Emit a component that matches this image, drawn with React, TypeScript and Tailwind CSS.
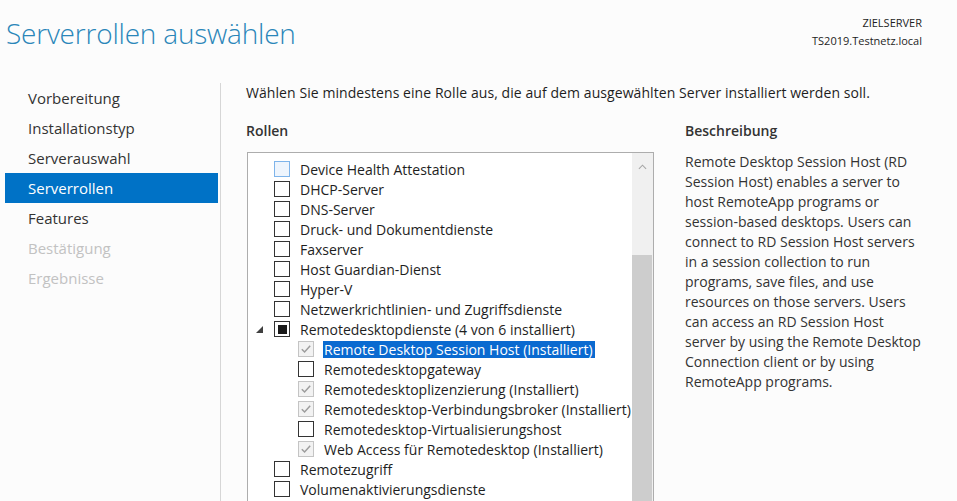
import React from 'react';

// --- DATA ---
const navItems = [
  { label: 'Vorbereitung', state: 'normal' },
  { label: 'Installationstyp', state: 'normal' },
  { label: 'Serverauswahl', state: 'normal' },
  { label: 'Serverrollen', state: 'active' },
  { label: 'Features', state: 'normal' },
  { label: 'Bestätigung', state: 'disabled' },
  { label: 'Ergebnisse', state: 'disabled' },
];

type CheckState = 'off' | 'focus' | 'installed' | 'partial';

interface Role {
  label: string;
  check: CheckState;
  level: 0 | 1;
  expander?: boolean;
  selected?: boolean;
}

const roles: Role[] = [
  { label: 'Device Health Attestation', check: 'focus', level: 0 },
  { label: 'DHCP-Server', check: 'off', level: 0 },
  { label: 'DNS-Server', check: 'off', level: 0 },
  { label: 'Druck- und Dokumentdienste', check: 'off', level: 0 },
  { label: 'Faxserver', check: 'off', level: 0 },
  { label: 'Host Guardian-Dienst', check: 'off', level: 0 },
  { label: 'Hyper-V', check: 'off', level: 0 },
  { label: 'Netzwerkrichtlinien- und Zugriffsdienste', check: 'off', level: 0 },
  { label: 'Remotedesktopdienste (4 von 6 installiert)', check: 'partial', level: 0, expander: true },
  { label: 'Remote Desktop Session Host (Installiert)', check: 'installed', level: 1, selected: true },
  { label: 'Remotedesktopgateway', check: 'off', level: 1 },
  { label: 'Remotedesktoplizenzierung (Installiert)', check: 'installed', level: 1 },
  { label: 'Remotedesktop-Verbindungsbroker (Installiert)', check: 'installed', level: 1 },
  { label: 'Remotedesktop-Virtualisierungshost', check: 'off', level: 1 },
  { label: 'Web Access für Remotedesktop (Installiert)', check: 'installed', level: 1 },
  { label: 'Remotezugriff', check: 'off', level: 0 },
  { label: 'Volumenaktivierungsdienste', check: 'off', level: 0 },
];

const description = [
  'Remote Desktop Session Host (RD',
  'Session Host) enables a server to',
  'host RemoteApp programs or',
  'session-based desktops. Users can',
  'connect to RD Session Host servers',
  'in a session collection to run',
  'programs, save files, and use',
  'resources on those servers. Users',
  'can access an RD Session Host',
  'server by using the Remote Desktop',
  'Connection client or by using',
  'RemoteApp programs.',
];

// --- CHECKBOX ---
function Checkbox({ state }: { state: CheckState }) {
  if (state === 'focus') {
    return <span className="w-4 h-4 shrink-0 border border-[#7eb4ea] bg-[#eef5fd]" />;
  }
  if (state === 'installed') {
    return (
      <span className="w-4 h-4 shrink-0 border border-[#c4c4c4] bg-[#f2f2f2] flex items-center justify-center">
        <svg viewBox="0 0 14 14" className="w-[14px] h-[14px]">
          <path d="M2.8 7.2 L5.6 10 L11.2 3.8" fill="none" stroke="#9c9c9c" strokeWidth="1.5" />
        </svg>
      </span>
    );
  }
  if (state === 'partial') {
    return (
      <span className="w-4 h-4 shrink-0 border border-[#333] bg-white flex items-center justify-center">
        <span className="w-[9px] h-[9px] bg-[#1a1a1a]" />
      </span>
    );
  }
  return <span className="w-4 h-4 shrink-0 border border-[#333] bg-white" />;
}

function RoleRow({ role }: { role: Role }) {
  return (
    <div className="h-5 flex items-center">
      <span className="w-[26px] shrink-0 flex items-center justify-start pl-[8px]">
        {role.expander && (
          <svg viewBox="0 0 7 7" className="w-[7px] h-[7px]">
            <path d="M7 0 L7 7 L0 7 Z" fill="#404040" />
          </svg>
        )}
      </span>
      {role.level === 1 && <span className="w-6 shrink-0" />}
      <Checkbox state={role.check} />
      <span
        className={
          role.selected
            ? 'ml-[9px] pl-px pr-[2px] leading-[17px] bg-[#0a6ad0] text-white whitespace-nowrap'
            : 'ml-[10px] whitespace-nowrap text-[#1e1e1e]'
        }
      >
        {role.label}
      </span>
    </div>
  );
}

export default function App() {
  return (
    <div className="w-[957px] h-[501px] bg-[#fcfcfc] overflow-hidden flex flex-col font-['Open_Sans',sans-serif] text-[#1e1e1e]">
      {/* Header */}
      <div className="h-[83px] shrink-0 flex justify-between pl-[6px] pr-[35px]">
        <h1 className="pt-[12px] text-[28px] font-light text-[#2a86b9] leading-[42px] tracking-[-0.2px]">
          Serverrollen auswählen
        </h1>
        <div className="pt-[14px] text-right text-[11px] leading-[18px] text-[#1e1e1e]">
          <div>ZIELSERVER</div>
          <div>TS2019.Testnetz.local</div>
        </div>
      </div>

      {/* Body */}
      <div className="flex flex-1 min-h-0">
        {/* Wizard steps */}
        <nav className="w-[221px] shrink-0 border-r border-[#d6d6d6] text-[15px]">
          {navItems.map((item) => (
            <div
              key={item.label}
              className={
                item.state === 'active'
                  ? 'ml-[5px] w-[213px] h-[30px] flex items-center pl-[23px] bg-[#0072c6] text-white'
                  : item.state === 'disabled'
                  ? 'ml-[5px] w-[213px] h-[30px] flex items-center pl-[23px] text-[#c2c2c2]'
                  : 'ml-[5px] w-[213px] h-[30px] flex items-center pl-[23px] text-[#333]'
              }
            >
              {item.label}
            </div>
          ))}
        </nav>

        {/* Main */}
        <main className="flex-1 pl-[25px] text-[14px]">
          <p className="leading-[20px] tracking-[0.07px]">
            Wählen Sie mindestens eine Rolle aus, die auf dem ausgewählten Server installiert werden soll.
          </p>

          <div className="flex mt-[18px]">
            {/* Roles column */}
            <div className="w-[408px] shrink-0">
              <h2 className="leading-[20px] font-semibold text-[#333]">Rollen</h2>
              <div className="mt-[11px] ml-px h-[400px] border border-[#adadad] bg-white flex">
                <div className="flex-1 pt-[6px] overflow-hidden">
                  {roles.map((r) => (
                    <RoleRow key={r.label} role={r} />
                  ))}
                </div>
                {/* Scrollbar */}
                <div className="w-[21px] shrink-0 flex flex-col bg-[#f0f0f0]">
                  <div className="h-[28px] flex items-center justify-center">
                    <svg viewBox="0 0 10 6" className="w-[9px] h-[6px]">
                      <path d="M1 5 L5 1 L9 5" fill="none" stroke="#a6a6a6" strokeWidth="1.2" />
                    </svg>
                  </div>
                  <div className="h-[74px]" />
                  <div className="flex-1 bg-[#cdcdcd] mr-px" />
                </div>
              </div>
            </div>

            {/* Description column */}
            <div className="ml-[31px] flex-1">
              <h2 className="leading-[20px] font-semibold text-[#333]">Beschreibung</h2>
              <div className="mt-[11px] leading-[20px] text-[#333]">
                {description.map((line) => (
                  <div key={line} className="whitespace-nowrap">
                    {line}
                  </div>
                ))}
              </div>
            </div>
          </div>
        </main>
      </div>
    </div>
  );
}
